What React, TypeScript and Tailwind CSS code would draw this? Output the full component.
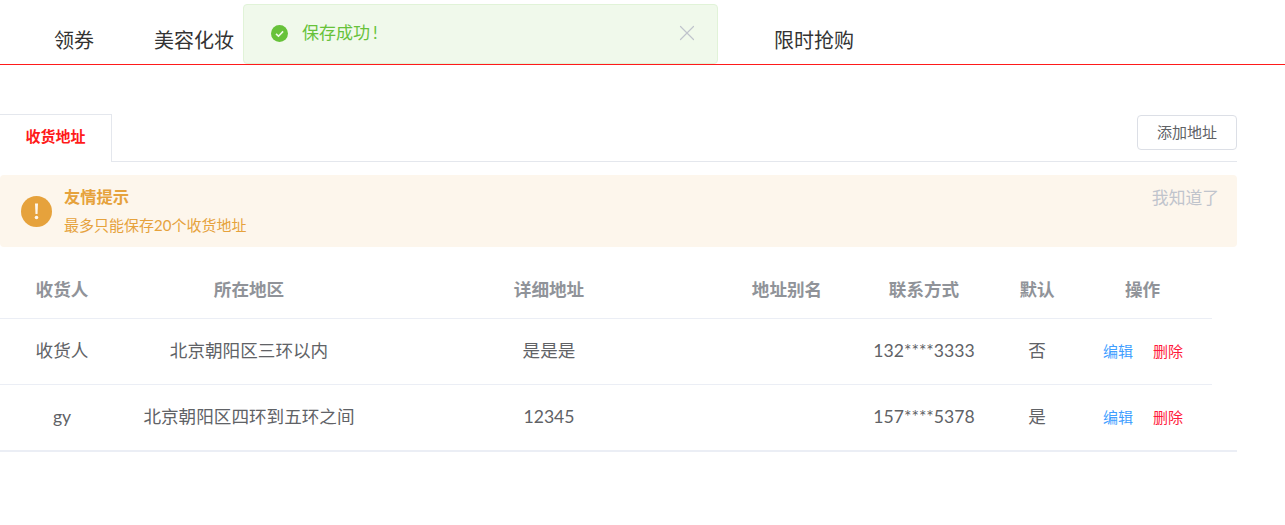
import { X } from 'lucide-react'

const font = { fontFamily: 'Lato, "Noto Sans CJK SC", sans-serif' }

const columns = [
  { title: '收货人', width: 'w-[124px]', extra: '' },
  { title: '所在地区', width: 'w-[250px]', extra: '' },
  { title: '详细地址', width: 'w-[350px]', extra: '' },
  { title: '地址别名', width: 'w-[126px]', extra: '' },
  { title: '联系方式', width: 'w-[148px]', extra: '' },
  { title: '默认', width: 'w-[78px]', extra: '' },
  { title: '操作', width: 'w-[136px]', extra: 'pr-[3px]' },
]

const rows = [
  { name: '收货人', area: '北京朝阳区三环以内', detail: '是是是', alias: '', phone: '132****3333', isDefault: '否' },
  { name: 'gy', area: '北京朝阳区四环到五环之间', detail: '12345', alias: '', phone: '157****5378', isDefault: '是' },
]

export default function App() {
  return (
    <div style={font} className="relative h-[525px] w-[1285px] overflow-hidden bg-white">
      {/* Top nav */}
      <div className="flex h-[65px] items-end border-b border-[#ff1a1a] pb-[9px] pl-[54px] text-[20px] leading-[30px] text-[#333333]">
        <span>领券</span>
        <span className="ml-[60px]">美容化妆</span>
        <span className="ml-[540px]">限时抢购</span>
      </div>

      {/* Toast */}
      <div className="absolute left-[243px] top-[4px] flex h-[60px] w-[475px] items-center rounded border border-[#e1f3d8] bg-[#f0f9eb] pl-[27px] pr-[17px]">
        <svg width="17" height="17" viewBox="0 0 17 17" className="-mt-[2px]" aria-hidden="true">
          <circle cx="8.5" cy="8.5" r="8.5" fill="#67c23a" />
          <path d="M5 8.8l2.5 2.4 4.6-4.8" fill="none" stroke="#f0f9eb" strokeWidth="1.6" />
        </svg>
        <span className="-mt-[3px] ml-[14px] flex-1 text-[17px] leading-none text-[#67c23a]">
          保存成功<span className="ml-[3px]">!</span>
        </span>
        <X size={26} strokeWidth={1.1} className="-mt-[3px] text-[#c0c4cc]" />
      </div>

      <div className="w-[1237px] pt-[49px]">
        {/* Tab bar */}
        <div className="flex h-[48px] items-start justify-between border-b border-[#e4e7ed]">
          <div className="flex h-[48px] w-[112px] items-center justify-center border-r border-t border-[#e4e7ed] bg-white pb-[5px] text-[15px] font-bold text-[#ff1a1a]">
            收货地址
          </div>
          <button className="mt-px flex h-[35px] w-[100px] items-center justify-center rounded border border-[#dcdfe6] bg-white text-[15px] text-[#606266]">
            添加地址
          </button>
        </div>

        {/* Notice */}
        <div className="mt-[13px] flex h-[72px] rounded bg-[#fdf6ec] pl-[21px] pr-[18px]">
          <svg width="31" height="31" viewBox="0 0 31 31" className="mt-[21px]" aria-hidden="true">
            <circle cx="15.5" cy="15.5" r="15.5" fill="#e6a23c" />
            <path d="M14 7.5h3l-.5 10.5h-2z" fill="#fdf6ec" />
            <circle cx="15.5" cy="21.5" r="1.8" fill="#fdf6ec" />
          </svg>
          <div className="ml-[12px] flex-1 text-[#e6a23c]">
            <p className="mt-[10px] text-[16.3px] font-bold leading-[24px]">友情提示</p>
            <p className="mt-[5px] text-[15px] leading-[22px]">最多只能保存20个收货地址</p>
          </div>
          <span className="mt-[11px] text-[16.8px] leading-[24px] text-[#c0c4cc]">我知道了</span>
        </div>

        {/* Address table */}
        <div className="mt-[13px] border-b-2 border-[#ebeef5]">
          <table className="w-[1212px] table-fixed border-collapse text-center text-[17.6px]">
            <thead>
              <tr className="h-[58px] border-b border-[#ebeef5]">
                {columns.map((col) => (
                  <th key={col.title} className={`${col.width} ${col.extra} pt-[2px] font-bold text-[#909399]`}>
                    {col.title}
                  </th>
                ))}
              </tr>
            </thead>
            <tbody className="text-[#606266]">
              {rows.map((row, i) => (
                <tr key={row.phone} className={i === 0 ? 'h-[66px] border-b border-[#ebeef5]' : 'h-[66px]'}>
                  <td>{row.name}</td>
                  <td>{row.area}</td>
                  <td>{row.detail}</td>
                  <td>{row.alias}</td>
                  <td>{row.phone}</td>
                  <td>{row.isDefault}</td>
                  <td className="pr-[2px] text-[15px]">
                    <span className="text-[#409eff]">编辑</span>
                    <span className="ml-[20px] text-[#ff1a3c]">删除</span>
                  </td>
                </tr>
              ))}
            </tbody>
          </table>
        </div>
      </div>
    </div>
  )
}
